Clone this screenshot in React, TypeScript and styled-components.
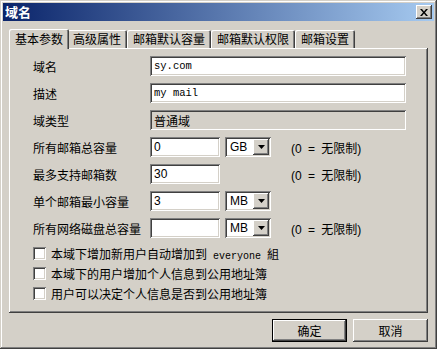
import React from 'react';
import styled, { createGlobalStyle } from 'styled-components';

const GlobalStyle = createGlobalStyle`
  html, body {
    margin: 0;
    padding: 0;
    background: #d4d0c8;
  }
  * { box-sizing: border-box; }
`;

const raised = `
  box-shadow: inset -1px -1px #404040, inset 1px 1px #ffffff,
    inset -2px -2px #808080, inset 2px 2px #d4d0c8;
`;

const sunken = `
  box-shadow: inset 1px 1px #808080, inset -1px -1px #ffffff,
    inset 2px 2px #404040, inset -2px -2px #d4d0c8;
`;

const FONT = `"Noto Sans CJK SC", "Liberation Sans", sans-serif`;
const LATIN = `"Liberation Sans", "Noto Sans CJK SC", sans-serif`;
const MONO = `"Liberation Mono", "DejaVu Sans Mono", monospace`;
const NARROW = `"Liberation Sans Narrow", "Liberation Sans", sans-serif`;

const tabs = ['基本参数', '高级属性', '邮箱默认容量', '邮箱默认权限', '邮箱设置'];

export default function App() {
  return (
    <>
      <GlobalStyle />
      <Window>
        <TitleBar>
          <Title>域名</Title>
          <CloseButton>
            <svg width="8" height="7" viewBox="0 0 8 7">
              <path d="M0 0h2l2 2.5L6 0h2L5 3.5 8 7H6L4 4.5 2 7H0l3-3.5z" fill="#000" />
            </svg>
          </CloseButton>
        </TitleBar>

        <TabStrip>
          {tabs.map((t, i) => (
            <Tab key={t} $active={i === 0}>{t}</Tab>
          ))}
        </TabStrip>

        <Panel>
          <Rows>
            <Row>
              <Label>域名</Label>
              <TextBox $wide $mono>sy.com</TextBox>
            </Row>
            <Row>
              <Label>描述</Label>
              <TextBox $wide $mono>my mail</TextBox>
            </Row>
            <Row>
              <Label>域类型</Label>
              <TextBox $wide $readonly>普通域</TextBox>
            </Row>
            <Row>
              <Label>所有邮箱总容量</Label>
              <TextBox $num>0</TextBox>
              <Combo value="GB" />
              <Note>(0 = 无限制)</Note>
            </Row>
            <Row>
              <Label>最多支持邮箱数</Label>
              <TextBox $num>30</TextBox>
              <Spacer />
              <Note>(0 = 无限制)</Note>
            </Row>
            <Row>
              <Label>单个邮箱最小容量</Label>
              <TextBox $num>3</TextBox>
              <Combo value="MB" />
            </Row>
            <Row>
              <Label>所有网络磁盘总容量</Label>
              <TextBox $num></TextBox>
              <Combo value="MB" />
              <Note>(0 = 无限制)</Note>
            </Row>
          </Rows>

          <Checks>
            <CheckRow>
              <CheckBox />
              <span>本域下增加新用户自动增加到<Mono> everyone </Mono>組</span>
            </CheckRow>
            <CheckRow>
              <CheckBox />
              <span>本域下的用户增加个人信息到公用地址簿</span>
            </CheckRow>
            <CheckRow>
              <CheckBox />
              <span>用户可以决定个人信息是否到公用地址簿</span>
            </CheckRow>
          </Checks>
        </Panel>

        <Footer>
          <Button $default>确定</Button>
          <Button>取消</Button>
        </Footer>
      </Window>
    </>
  );
}

function Combo({ value }: { value: string }) {
  return (
    <ComboBox>
      <ComboText>{value}</ComboText>
      <DropButton>
        <svg width="7" height="4" viewBox="0 0 7 4">
          <path d="M0 0h7L3.5 4z" fill="#000" />
        </svg>
      </DropButton>
    </ComboBox>
  );
}

// --- Styled Components ---

const Window = styled.div`
  width: 437px;
  height: 349px;
  background: #d4d0c8;
  padding: 3px;
  display: flex;
  flex-direction: column;
  box-shadow: inset -1px -1px #404040, inset 1px 1px #d4d0c8,
    inset -2px -2px #808080, inset 2px 2px #ffffff;
  font-family: ${FONT};
  font-size: 12px;
  color: #000;
`;

const TitleBar = styled.div`
  height: 18px;
  display: flex;
  align-items: center;
  justify-content: space-between;
  padding: 0 2px 0 2px;
  background: linear-gradient(to right, #0a246a, #a6caf0);
`;

const Title = styled.span`
  color: #fff;
  font-weight: bold;
  font-size: 13px;
  line-height: 18px;
`;

const CloseButton = styled.div`
  width: 16px;
  height: 14px;
  background: #d4d0c8;
  display: flex;
  align-items: center;
  justify-content: center;
  ${raised}
`;

const TabStrip = styled.div`
  display: flex;
  align-items: flex-end;
  height: 20px;
  margin: 7px 0 0 8px;
  position: relative;
  z-index: 1;
`;

const Tab = styled.div<{ $active?: boolean }>`
  height: ${p => (p.$active ? 20 : 18)}px;
  margin: 0 ${p => (p.$active ? -2 : 0)}px ${p => (p.$active ? -1 : 0)}px;
  padding: 0 6px;
  padding-top: ${p => (p.$active ? 2 : 1)}px;
  background: #d4d0c8;
  line-height: 16px;
  white-space: nowrap;
  border-radius: 2px 2px 0 0;
  position: relative;
  z-index: ${p => (p.$active ? 2 : 1)};
  box-shadow: inset 1px 1px #ffffff, inset -1px 0 #404040, inset -2px 0 #808080;
`;

const Panel = styled.div`
  margin: 0 6px 0 6px;
  height: 265px;
  padding: 8px 20px 0 24px;
  box-shadow: inset -1px -1px #404040, inset 1px 1px #ffffff,
    inset -2px -2px #808080;
`;

const Rows = styled.div`
  display: flex;
  flex-direction: column;
  gap: 7px;
`;

const Row = styled.div`
  display: flex;
  align-items: center;
  height: 20px;
`;

const Label = styled.div`
  width: 117px;
  flex-shrink: 0;
  white-space: nowrap;
`;

const TextBox = styled.div<{ $wide?: boolean; $mono?: boolean; $readonly?: boolean; $num?: boolean }>`
  width: ${p => (p.$wide ? '256px' : '70px')};
  height: 20px;
  padding: 0 4px;
  display: flex;
  align-items: center;
  background: ${p => (p.$readonly ? '#d4d0c8' : '#ffffff')};
  font-family: ${p => (p.$mono ? MONO : p.$num ? NARROW : FONT)};
  font-size: ${p => (p.$mono ? '10.5px' : '12px')};
  white-space: pre;
  ${sunken}
`;

const ComboBox = styled.div`
  width: 46px;
  height: 20px;
  margin-left: 5px;
  padding: 2px;
  display: flex;
  align-items: center;
  background: #fff;
  ${sunken}
`;

const ComboText = styled.span`
  flex: 1;
  padding-left: 3px;
  font-family: ${NARROW};
  font-size: 12px;
`;

const DropButton = styled.div`
  width: 16px;
  height: 16px;
  background: #d4d0c8;
  display: flex;
  align-items: center;
  justify-content: center;
  ${raised}
`;

const Spacer = styled.div`
  width: 51px;
`;

const Note = styled.span`
  margin-left: 20px;
  font-family: ${LATIN};
  word-spacing: 3px;
  white-space: pre;
`;

const Checks = styled.div`
  display: flex;
  flex-direction: column;
  margin-top: 5px;
`;

const CheckRow = styled.div`
  display: flex;
  align-items: center;
  gap: 5px;
  height: 20px;
  white-space: pre;
`;

const CheckBox = styled.div`
  width: 13px;
  height: 13px;
  background: #fff;
  ${sunken}
`;

const Mono = styled.span`
  font-family: ${MONO};
  font-size: 10px;
`;

const Footer = styled.div`
  display: flex;
  justify-content: flex-end;
  gap: 6px;
  margin: 6px 6px 0 0;
`;

const Button = styled.div<{ $default?: boolean }>`
  width: 75px;
  height: 23px;
  display: flex;
  align-items: center;
  justify-content: center;
  background: #d4d0c8;
  ${p =>
    p.$default
      ? `box-shadow: inset 0 0 0 1px #000, inset -2px -2px #404040, inset 2px 2px #ffffff, inset -3px -3px #808080;`
      : raised}
`;
